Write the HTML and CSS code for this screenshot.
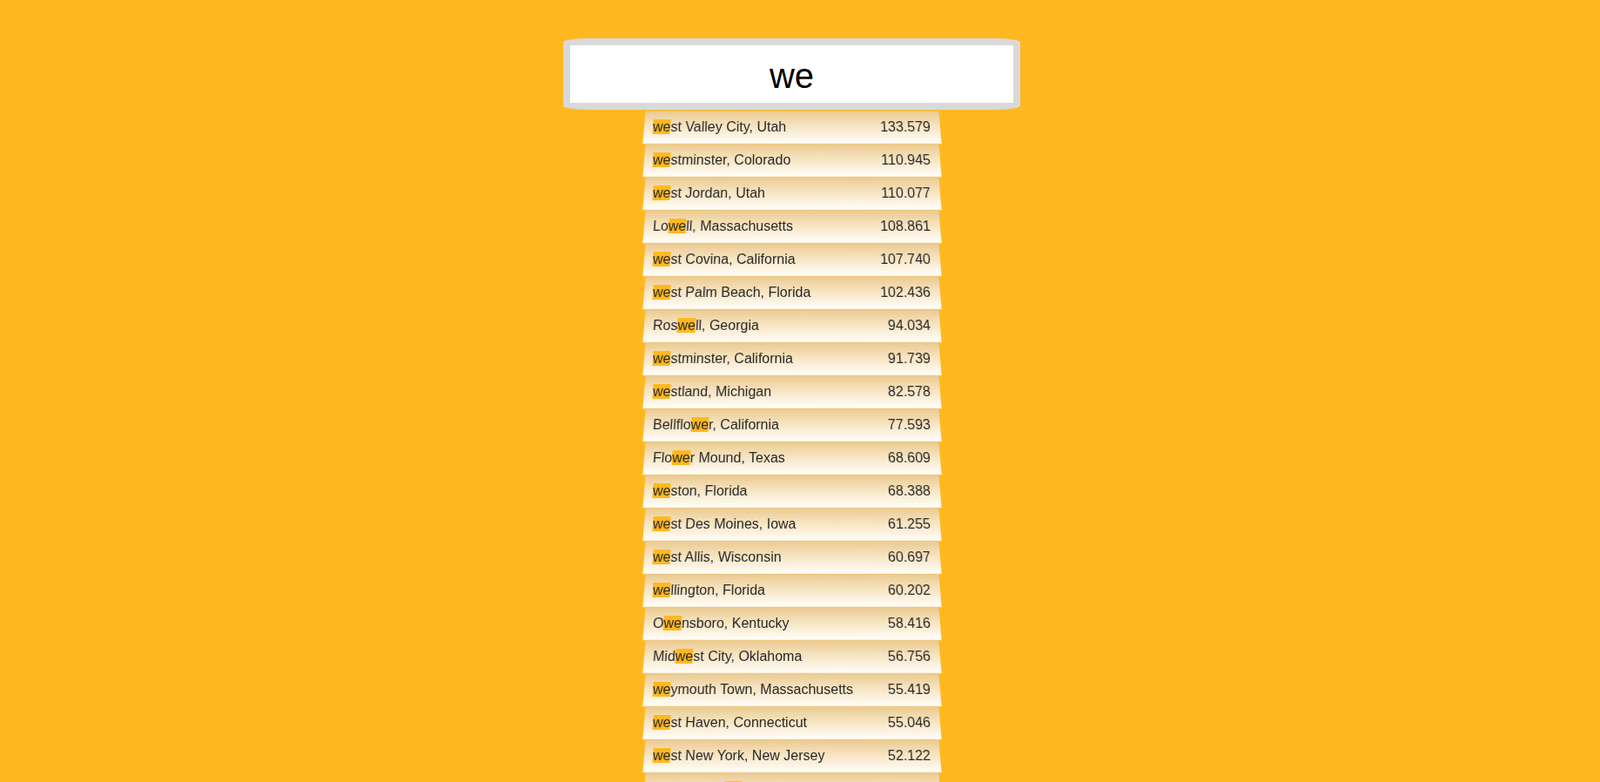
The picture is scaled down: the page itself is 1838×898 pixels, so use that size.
FILE: index.html
```html
<!DOCTYPE html>
<html lang="en">
<head>
<meta charset="UTF-8">
<title>Type Ahead</title>
<link rel="stylesheet" href="styles.css">
</head>
<body>
<form class="search-form">
  <input type="text" class="search" value="we" placeholder="City or State">
  <ul class="suggestions">
    <li><span class="name"><span class="hl">we</span>st Valley City, Utah</span><span class="population">133.579</span></li>
    <li><span class="name"><span class="hl">we</span>stminster, Colorado</span><span class="population">110.945</span></li>
    <li><span class="name"><span class="hl">we</span>st Jordan, Utah</span><span class="population">110.077</span></li>
    <li><span class="name">Lo<span class="hl">we</span>ll, Massachusetts</span><span class="population">108.861</span></li>
    <li><span class="name"><span class="hl">we</span>st Covina, California</span><span class="population">107.740</span></li>
    <li><span class="name"><span class="hl">we</span>st Palm Beach, Florida</span><span class="population">102.436</span></li>
    <li><span class="name">Ros<span class="hl">we</span>ll, Georgia</span><span class="population">94.034</span></li>
    <li><span class="name"><span class="hl">we</span>stminster, California</span><span class="population">91.739</span></li>
    <li><span class="name"><span class="hl">we</span>stland, Michigan</span><span class="population">82.578</span></li>
    <li><span class="name">Bellflo<span class="hl">we</span>r, California</span><span class="population">77.593</span></li>
    <li><span class="name">Flo<span class="hl">we</span>r Mound, Texas</span><span class="population">68.609</span></li>
    <li><span class="name"><span class="hl">we</span>ston, Florida</span><span class="population">68.388</span></li>
    <li><span class="name"><span class="hl">we</span>st Des Moines, Iowa</span><span class="population">61.255</span></li>
    <li><span class="name"><span class="hl">we</span>st Allis, Wisconsin</span><span class="population">60.697</span></li>
    <li><span class="name"><span class="hl">we</span>llington, Florida</span><span class="population">60.202</span></li>
    <li><span class="name">O<span class="hl">we</span>nsboro, Kentucky</span><span class="population">58.416</span></li>
    <li><span class="name">Mid<span class="hl">we</span>st City, Oklahoma</span><span class="population">56.756</span></li>
    <li><span class="name"><span class="hl">we</span>ymouth Town, Massachusetts</span><span class="population">55.419</span></li>
    <li><span class="name"><span class="hl">we</span>st Haven, Connecticut</span><span class="population">55.046</span></li>
    <li><span class="name"><span class="hl">we</span>st New York, New Jersey</span><span class="population">52.122</span></li>
    <li><span class="name">Norwalk Cit<span class="hl">we</span>st, Ohio</span><span class="population">49.891</span></li>
  </ul>
</form>
</body>
</html>
```
FILE: styles.css
```css
html {
  background: #ffb81f;
}
body {
  margin: 0;
  padding-right: 19px;
  font-family: "Liberation Sans", Arial, sans-serif;
  color: #262626;
}
.search-form {
  width: 340px;
  margin: 44px auto 0;
  display: flex;
  flex-direction: column;
  align-items: center;
}
.search {
  flex-shrink: 0;
  box-sizing: border-box;
  width: 525px;
  height: 82px;
  margin: 0;
  padding: 4px 20px 0;
  border: 8px solid #d9d9d9;
  border-radius: 26px / 5px;
  background: #ffffff;
  outline: 0;
  text-align: center;
  font-family: "Liberation Sans", Arial, sans-serif;
  font-size: 40px;
  color: #000000;
}
.suggestions {
  width: 100%;
  margin: 1px 0 0;
  padding: 0;
  list-style: none;
}
.suggestions li {
  box-sizing: border-box;
  height: 38px;
  padding: 0 11px 0 10px;
  display: flex;
  justify-content: space-between;
  align-items: center;
  font-size: 16px;
  background: linear-gradient(to bottom, #eac98f 0%, #f6e3bf 45%, #fffdf8 100%);
  border-bottom: 1px solid #fcefd4;
  transform: perspective(100px) rotateX(3deg);
}
.population {
  font-size: 16px;
}
.hl {
  background: #ffb81f;
}
```
